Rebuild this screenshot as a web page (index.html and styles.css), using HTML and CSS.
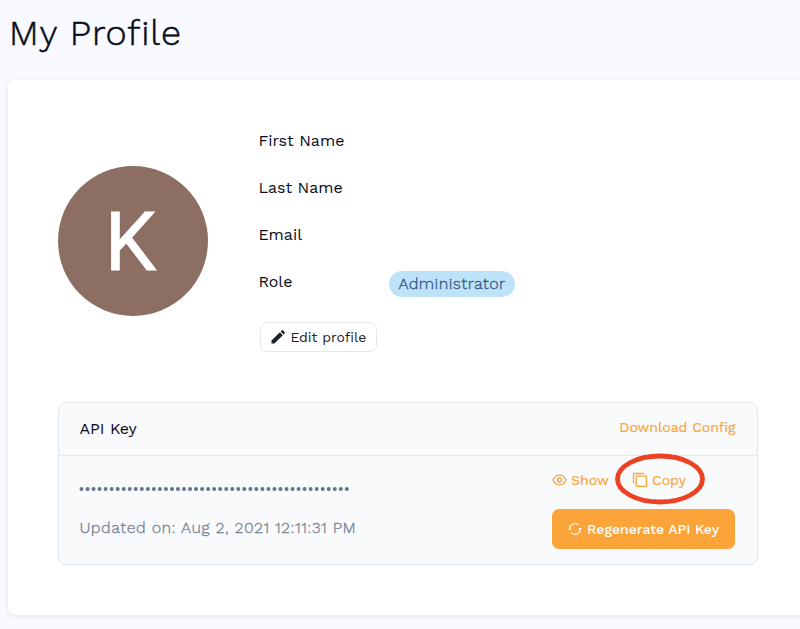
FILE: index.html
```html
<!DOCTYPE html>
<html lang="en">
<head>
<meta charset="utf-8">
<title>My Profile</title>
<link rel="stylesheet" href="styles.css">
</head>
<body>
<h1 class="title">My Profile</h1>
<main class="card">
  <section class="profile">
    <div class="avatar">K</div>
    <div class="details">
      <dl class="fields">
        <div class="field"><dt>First Name</dt></div>
        <div class="field"><dt>Last Name</dt></div>
        <div class="field"><dt>Email</dt></div>
        <div class="field"><dt>Role</dt><dd class="badge">Administrator</dd></div>
      </dl>
      <button class="edit">
        <svg width="16" height="16" viewBox="0 0 16 16" fill="currentColor"><path d="M1.500 14.500v-2.900L9.900 3.300l2.900 2.900L4.400 14.500zM10.700 2.500l.9-.9c.5-.5 1.100-.5 1.600 0l1.300 1.300c.5.5.5 1.100 0 1.600l-.9.9z"/></svg>
        <span>Edit profile</span>
      </button>
    </div>
  </section>
  <section class="api">
    <header class="api-head">
      <h2>API Key</h2>
      <a class="download">Download Config</a>
    </header>
    <div class="api-body">
      <div class="key">
        <svg class="dots" width="272" height="6" viewBox="0 0 272 6"><path d="M2.500 3H271" fill="none" stroke="currentColor" stroke-width="4" stroke-linecap="round" stroke-dasharray="0 6.030"/></svg>
        <p class="updated">Updated on: Aug 2, 2021 12:11:31 PM</p>
      </div>
      <div class="actions">
        <div class="links">
          <a class="show"><svg width="15" height="12" viewBox="0 0 15 12" fill="none" stroke="currentColor" stroke-width="1.300"><path d="M1 6C2.500 2.700 4.700 1.200 7.500 1.200S12.500 2.700 14 6C12.500 9.300 10.300 10.800 7.500 10.800S2.500 9.300 1 6Z"/><circle cx="7.500" cy="6" r="2"/></svg><span>Show</span></a>
          <a class="copy"><svg width="16" height="16" viewBox="0 0 16 16" fill="none" stroke="currentColor" stroke-width="1.300"><rect x="4.200" y="4.200" width="10.200" height="10.200" rx=".5"/><path d="M1.500 11.500V2q0-.5.5-.5H12"/></svg><span>Copy</span>
            <svg class="ring" width="92" height="54" viewBox="0 0 92 54"><ellipse cx="46" cy="27" rx="42.500" ry="23" fill="none" stroke="#ed4124" stroke-width="4.800"/></svg>
          </a>
        </div>
        <button class="regen">
          <svg width="14" height="14" viewBox="0 0 14 14" fill="none" stroke="currentColor" stroke-width="1.100"><path d="M1.700 7.500A5.300 5.300 0 0 1 11 3.500M12.300 6.500A5.300 5.300 0 0 1 3 10.500"/><path d="M0 7.800 1.800 5.600 3.600 7.800zM10.400 6.200l1.800 2.200 1.800-2.200z" fill="currentColor" stroke="none"/></svg>
          <span>Regenerate API Key</span>
        </button>
      </div>
    </div>
  </section>
</main>
</body>
</html>
```

FILE: styles.css
```css
* { box-sizing: border-box; }
body {
  margin: 0;
  height: 629px;
  background: #f9faff;
  color: #080b1a;
  font-family: "Work Sans", Inter, sans-serif;
  font-size: 16px;
}
h1, h2, p, dl, dt, dd { margin: 0; font-weight: 400; }
button { font: inherit; display: flex; align-items: center; }
svg { display: block; flex: none; }
a { display: flex; align-items: center; }

.title {
  height: 80px;
  padding: 13px 0 0 9px;
  font-size: 36px;
  line-height: 40px;
  font-weight: 300;
  letter-spacing: .95px;
  -webkit-text-stroke: .5px currentColor;
}
.card {
  height: 535px;
  margin-left: 8.400px;
  padding: 46px 0 0 50px;
  background: #fff;
  border-radius: 8px 0 0 8px;
  box-shadow: 0 1px 5px rgba(30, 40, 80, .12);
}
.profile { display: flex; height: 276px; }
.avatar {
  width: 150px;
  height: 150px;
  margin: 40px 50px 0 0;
  padding-right: 6px;
  border-radius: 50%;
  background: #8d6e63;
  color: #fff;
  font: 400 82px/152px Roboto, sans-serif;
  -webkit-text-stroke: .8px currentColor;
  text-align: center;
}
.field { display: flex; height: 47px; line-height: 30px; }
.field dt { width: 130.500px; }
.badge {
  height: 26px;
  margin-top: 4px;
  padding: 0 9.500px;
  border-radius: 13px;
  background: #bee3f8;
  color: #2c5282;
  line-height: 26px;
  font-weight: 300;
  letter-spacing: .42px;
  -webkit-text-stroke: .3px currentColor;
}
.edit {
  width: 117px;
  height: 30px;
  margin: 8px 0 0 2px;
  padding: 0 0 0 9px;
  gap: 4px;
  border: 1px solid #e2e8f0;
  border-radius: 7px;
  background: #fff;
  color: #1a202c;
  font-size: 14px;
}
.api {
  width: 700px;
  height: 163px;
  border: 1px solid #e2e8f0;
  border-radius: 8px;
  background: #f9fafc;
}
.api-head {
  display: flex;
  justify-content: space-between;
  height: 53px;
  padding: 0 22px 0 20px;
  border-bottom: 1px solid #e2e8f0;
  line-height: 52px;
}
.api-head h2 { font-size: 16px; }
.download, .links { color: #fba43a; font-size: 14px; -webkit-text-stroke: .2px currentColor; }
.download { height: 48px; }
.api-body { display: flex; justify-content: space-between; padding: 0 22px 0 20px; }
.dots { margin-top: 30px; color: #64748b; }
.updated {
  margin-top: 21px;
  color: #718096;
  line-height: 30px;
  font-weight: 300;
  letter-spacing: .48px;
  -webkit-text-stroke: .3px currentColor;
  white-space: nowrap;
}
.links { display: flex; height: 53px; }
.links a { height: 48px; }
.show { width: 80px; gap: 4px; }
.copy { position: relative; gap: 4px; }
.ring { position: absolute; left: -18.500px; top: -4px; }
.regen {
  width: 183.300px;
  height: 40px;
  padding: 0 0 0 16px;
  gap: 5px;
  border: 0;
  border-radius: 7px;
  background: #fba43a;
  color: #fff;
  font-size: 14px;
  font-weight: 500;
  white-space: nowrap;
}
```
